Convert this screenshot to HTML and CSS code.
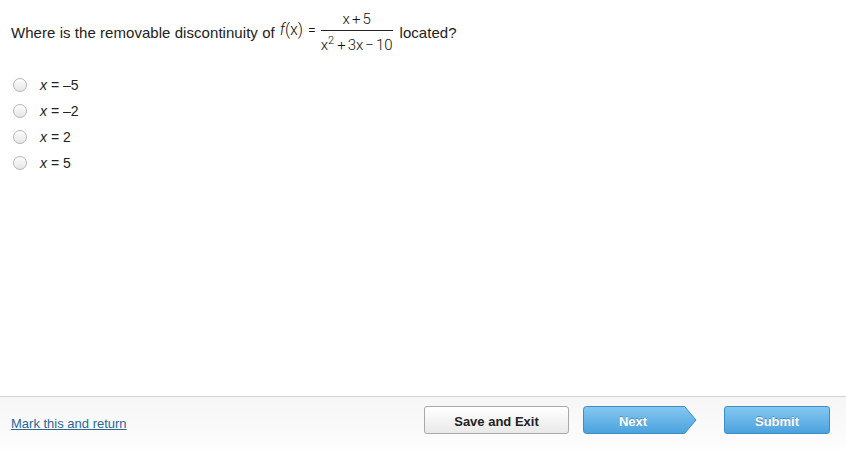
FILE: index.html
```html
<!DOCTYPE html>
<html>
<head>
<meta charset="utf-8">
<link rel="stylesheet" href="styles.css">
</head>
<body>
<div class="page">
  <main class="content">
    <div class="question">
      <span class="qtext">Where is the removable discontinuity of</span>
      <span class="math">
        <span class="fx"><i class="f">f</i>(<span class="var">x</span>)</span>
        <span class="eq">=</span>
        <span class="frac">
          <span class="num"><span class="var">x</span><span class="op">+</span>5</span>
          <span class="den"><span class="var">x</span><sup>2</sup><span class="op">+</span>3<span class="var">x</span><span class="op">&minus;</span>10</span>
        </span>
      </span>
      <span class="qtext">located?</span>
    </div>
    <ul class="options">
      <li class="option"><span class="radio"></span><span class="label"><i>x</i> = &ndash;5</span></li>
      <li class="option"><span class="radio"></span><span class="label"><i>x</i> = &ndash;2</span></li>
      <li class="option"><span class="radio"></span><span class="label"><i>x</i> = 2</span></li>
      <li class="option"><span class="radio"></span><span class="label"><i>x</i> = 5</span></li>
    </ul>
  </main>
  <footer class="footer">
    <a class="mark" href="#">Mark this and return</a>
    <div class="actions">
      <button class="btn btn-save">Save and Exit</button>
      <button class="btn btn-next">
        <svg class="next-shape" width="114" height="28" viewBox="0 0 114 28">
          <defs>
            <linearGradient id="ng" x1="0" y1="0" x2="0" y2="1">
              <stop offset="0" stop-color="#85c8f1"/>
              <stop offset="1" stop-color="#4ba2de"/>
            </linearGradient>
          </defs>
          <path d="M3.5 0.5 H101.5 L113 14 L101.5 27.5 H3.5 Q0.5 27.5 0.5 24.5 V3.5 Q0.5 0.5 3.5 0.5 Z" fill="url(#ng)" stroke="#3d8cc6" stroke-width="1"/>
        </svg>
        <span class="next-label">Next</span>
      </button>
      <button class="btn btn-submit">Submit</button>
    </div>
  </footer>
</div>
</body>
</html>
```
FILE: styles.css
```css
* { box-sizing: border-box; }
html, body { margin: 0; padding: 0; background: #fff; }
body { font-family: "Liberation Sans", Arial, sans-serif; color: #222; }
.page { width: 846px; height: 449px; display: flex; flex-direction: column; }
.content { flex: 1; padding: 12px 0 0 11px; }
.question { display: flex; align-items: center; font-size: 15px; height: 41px; }
.qtext { letter-spacing: 0.05px; }
.math { display: inline-flex; align-items: center; margin: 0 7px 0 5px; font-family: Roboto, "Liberation Sans", sans-serif; font-weight: 300; color: #111; }
.fx { font-size: 16px; position: relative; top: -3px; }
.fx .f { font-style: italic; }
.var { font-style: normal; }
.op { margin: 0 2px; }
.eq { font-size: 14px; margin: 0 5px 0 5px; position: relative; top: -3px; }
.frac { display: inline-flex; flex-direction: column; align-items: center; font-size: 15px; }
.num { padding: 0 6px 2px; border-bottom: 1px solid #222; width: 100%; text-align: center; line-height: 17px; }
.den { padding: 1px 0 0; line-height: 17px; }
.den sup { font-size: 11px; vertical-align: 6px; margin-right: 1px; }
.options { list-style: none; margin: 19px 0 0; padding: 0; }
.option { display: flex; align-items: center; height: 26px; font-size: 14px; }
.radio { width: 14px; height: 14px; border-radius: 50%; border: 1px solid #b5b5b5; background: linear-gradient(#fdfdfd, #e6e6e6); margin: 0 13px 0 2px; box-shadow: inset 0 1px 1px rgba(255,255,255,0.8); }
.label i { font-style: italic; }
.footer { height: 53px; border-top: 1px solid #d2d2d2; background: linear-gradient(#f6f6f6, #fdfdfd); display: flex; align-items: flex-start; justify-content: space-between; padding: 9px 16px 0 11px; }
.mark { font-size: 13px; color: #2a6898; text-decoration: underline; margin-top: 10px; }
.actions { display: flex; align-items: center; }
.btn { font-family: "Liberation Sans", Arial, sans-serif; font-weight: bold; font-size: 13px; height: 28px; padding: 2px 0 0; cursor: pointer; }
.btn-save { width: 145px; border: 1px solid #a9a9a9; border-radius: 3px; background: linear-gradient(#ffffff, #e9e9e9); color: #222; }
.btn-next { position: relative; width: 114px; margin-left: 14px; border: none; background: none; color: #fff; text-shadow: 0 -1px 0 rgba(0,0,0,0.25); }
.next-shape { position: absolute; left: 0; top: 0; }
.next-label { position: relative; margin-right: 14px; }
.btn-submit { width: 106px; margin-left: 27px; border: 1px solid #3d8cc6; border-radius: 3px; background: linear-gradient(#85c8f1, #4ba2de); color: #fff; text-shadow: 0 -1px 0 rgba(0,0,0,0.25); }
```
